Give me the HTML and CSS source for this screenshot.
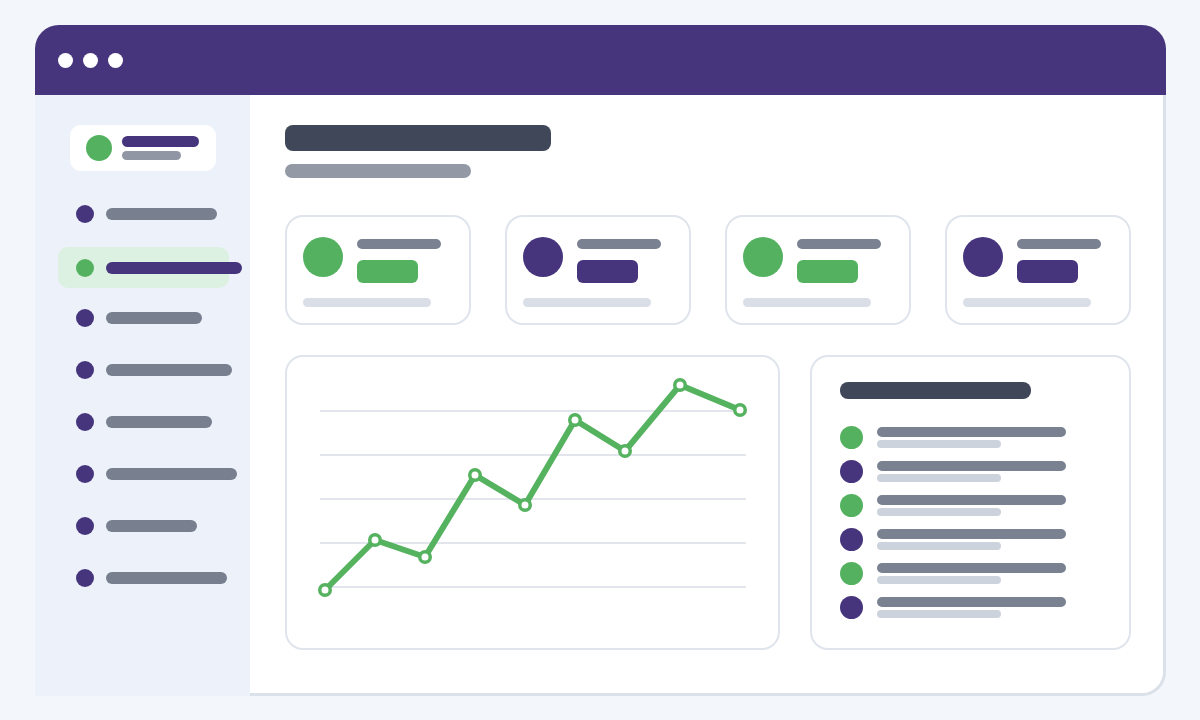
FILE: index.html
```html
<!DOCTYPE html>
<html lang="en">
<head>
<meta charset="utf-8">
<title>Dashboard</title>
<link rel="stylesheet" href="styles.css">
</head>
<body>
<div class="window">
  <div class="titlebar">
    <span class="tdot"></span><span class="tdot"></span><span class="tdot"></span>
  </div>
  <div class="body">
    <aside class="sidebar">
      <div class="brand">
        <span class="brand-dot"></span>
        <div class="brand-lines">
          <span class="brand-l1"></span>
          <span class="brand-l2"></span>
        </div>
      </div>
      <nav class="nav">
        <div class="nav-item"><span class="nav-dot"></span><span class="nav-bar w111"></span></div>
        <div class="nav-item active"><span class="nav-dot"></span><span class="nav-bar w136"></span></div>
        <div class="nav-item"><span class="nav-dot"></span><span class="nav-bar w96"></span></div>
        <div class="nav-item"><span class="nav-dot"></span><span class="nav-bar w126"></span></div>
        <div class="nav-item"><span class="nav-dot"></span><span class="nav-bar w106"></span></div>
        <div class="nav-item"><span class="nav-dot"></span><span class="nav-bar w131"></span></div>
        <div class="nav-item"><span class="nav-dot"></span><span class="nav-bar w91"></span></div>
        <div class="nav-item"><span class="nav-dot"></span><span class="nav-bar w121"></span></div>
      </nav>
    </aside>
    <main class="main">
      <div class="page-title"></div>
      <div class="page-sub"></div>
      <div class="stats">
        <div class="stat">
          <div class="stat-top">
            <span class="stat-icon green"></span>
            <div class="stat-lines"><span class="stat-label"></span><span class="stat-pill green"></span></div>
          </div>
          <span class="stat-foot"></span>
        </div>
        <div class="stat">
          <div class="stat-top">
            <span class="stat-icon purple"></span>
            <div class="stat-lines"><span class="stat-label"></span><span class="stat-pill purple"></span></div>
          </div>
          <span class="stat-foot"></span>
        </div>
        <div class="stat">
          <div class="stat-top">
            <span class="stat-icon green"></span>
            <div class="stat-lines"><span class="stat-label"></span><span class="stat-pill green"></span></div>
          </div>
          <span class="stat-foot"></span>
        </div>
        <div class="stat">
          <div class="stat-top">
            <span class="stat-icon purple"></span>
            <div class="stat-lines"><span class="stat-label"></span><span class="stat-pill purple"></span></div>
          </div>
          <span class="stat-foot"></span>
        </div>
      </div>
      <div class="lower">
        <div class="chart-card">
          <svg class="chart" width="491" height="291" viewBox="0 0 491 291">
            <g stroke="#e2e5ec" stroke-width="2">
              <line x1="33" y1="54" x2="459" y2="54"/>
              <line x1="33" y1="98" x2="459" y2="98"/>
              <line x1="33" y1="142" x2="459" y2="142"/>
              <line x1="33" y1="186" x2="459" y2="186"/>
              <line x1="33" y1="230" x2="459" y2="230"/>
            </g>
            <polyline fill="none" stroke="#55b25f" stroke-width="6" stroke-linejoin="round" stroke-linecap="round"
              points="38,233 88,183 138,200 188,118 238,148 288,63 338,94 393,28 453,53"/>
            <g fill="#ffffff" stroke="#55b25f" stroke-width="3.5">
              <circle cx="38" cy="233" r="5.25"/>
              <circle cx="88" cy="183" r="5.25"/>
              <circle cx="138" cy="200" r="5.25"/>
              <circle cx="188" cy="118" r="5.25"/>
              <circle cx="238" cy="148" r="5.25"/>
              <circle cx="288" cy="63" r="5.25"/>
              <circle cx="338" cy="94" r="5.25"/>
              <circle cx="393" cy="28" r="5.25"/>
              <circle cx="453" cy="53" r="5.25"/>
            </g>
          </svg>
        </div>
        <div class="list-card">
          <div class="list-title"></div>
          <div class="list">
            <div class="row"><span class="row-dot green"></span><div class="row-lines"><span class="row-l1"></span><span class="row-l2"></span></div></div>
            <div class="row"><span class="row-dot purple"></span><div class="row-lines"><span class="row-l1"></span><span class="row-l2"></span></div></div>
            <div class="row"><span class="row-dot green"></span><div class="row-lines"><span class="row-l1"></span><span class="row-l2"></span></div></div>
            <div class="row"><span class="row-dot purple"></span><div class="row-lines"><span class="row-l1"></span><span class="row-l2"></span></div></div>
            <div class="row"><span class="row-dot green"></span><div class="row-lines"><span class="row-l1"></span><span class="row-l2"></span></div></div>
            <div class="row"><span class="row-dot purple"></span><div class="row-lines"><span class="row-l1"></span><span class="row-l2"></span></div></div>
          </div>
        </div>
      </div>
    </main>
  </div>
</div>
</body>
</html>
```

FILE: styles.css
```css
* { box-sizing: border-box; }
html, body { margin: 0; padding: 0; }
body {
  background: #f3f6fb;
  font-family: "Liberation Sans", Arial, sans-serif;
  width: 1200px;
  height: 720px;
  overflow: hidden;
}
.window {
  margin: 25px 0 0 35px;
  width: 1131px;
  height: 671px;
  border-radius: 24px 24px 24px 0;
  overflow: hidden;
  background: #dbe1e9;
  display: flex;
  flex-direction: column;
}
.titlebar {
  height: 70px;
  background: #46357c;
  display: flex;
  align-items: center;
  gap: 10px;
  padding-left: 23px;
  flex: none;
}
.tdot {
  width: 15px;
  height: 15px;
  border-radius: 50%;
  background: #ffffff;
}
.body {
  display: flex;
  flex: 1;
  align-items: flex-start;
}
.sidebar {
  width: 215px;
  height: 601px;
  background: #edf1f9;
  padding-top: 30px;
  flex: none;
}
.brand {
  margin-left: 35px;
  width: 146px;
  height: 46px;
  background: #ffffff;
  border-radius: 11px;
  display: flex;
  align-items: center;
  padding-left: 16px;
  gap: 10px;
}
.brand-dot {
  width: 26px;
  height: 26px;
  border-radius: 50%;
  background: #54b160;
}
.brand-lines {
  display: flex;
  flex-direction: column;
  gap: 4px;
}
.brand-l1 {
  width: 77px;
  height: 11px;
  border-radius: 6px;
  background: #46357c;
}
.brand-l2 {
  width: 59px;
  height: 9px;
  border-radius: 5px;
  background: #9096a3;
}
.nav {
  margin: 23px 0 0 23px;
  display: flex;
  flex-direction: column;
  gap: 12px;
}
.nav-item {
  width: 171px;
  height: 40px;
  display: flex;
  align-items: center;
  padding-left: 18px;
  gap: 12px;
  border-radius: 10px;
}
.nav-item.active {
  background: #dcf1e1;
  height: 41px;
  margin-top: 1px;
  margin-bottom: -2px;
}
.nav-dot {
  width: 18px;
  height: 18px;
  border-radius: 50%;
  background: #46357c;
  flex: none;
}
.nav-item.active .nav-dot { background: #54b160; }
.nav-bar {
  height: 12px;
  border-radius: 6px;
  background: #787f8f;
  flex: none;
}
.nav-item.active .nav-bar { background: #46357c; }
.w111 { width: 111px; }
.w136 { width: 136px; }
.w96 { width: 96px; }
.w126 { width: 126px; }
.w106 { width: 106px; }
.w131 { width: 131px; }
.w91 { width: 91px; }
.w121 { width: 121px; }

.main {
  width: 913px;
  height: 598px;
  background: #ffffff;
  border-bottom-right-radius: 21px;
  padding: 30px 0 0 35px;
}
.page-title {
  width: 266px;
  height: 26px;
  border-radius: 8px;
  background: #3f4759;
}
.page-sub {
  margin-top: 13px;
  width: 186px;
  height: 14px;
  border-radius: 7px;
  background: #939aa6;
}
.stats {
  margin-top: 37px;
  display: flex;
  gap: 34px;
}
.stat {
  width: 186px;
  height: 110px;
  border: 2px solid #e0e4ec;
  border-radius: 18px;
  padding: 20px 0 0 16px;
  display: flex;
  flex-direction: column;
}
.stat-top {
  display: flex;
  gap: 14px;
  align-items: flex-start;
}
.stat-icon {
  width: 40px;
  height: 40px;
  border-radius: 50%;
}
.green { background: #54b160; }
.purple { background: #46357c; }
.stat-lines {
  margin-top: 2px;
  display: flex;
  flex-direction: column;
  gap: 11px;
}
.stat-label {
  width: 84px;
  height: 10px;
  border-radius: 5px;
  background: #7a8191;
}
.stat-pill {
  width: 61px;
  height: 23px;
  border-radius: 6px;
}
.stat-foot {
  margin-top: 15px;
  width: 128px;
  height: 9px;
  border-radius: 5px;
  background: #dadee7;
}
.lower {
  margin-top: 30px;
  display: flex;
  gap: 30px;
}
.chart-card {
  width: 495px;
  height: 295px;
  border: 2px solid #e0e4ec;
  border-radius: 18px;
}
.chart { display: block; }
.list-card {
  width: 321px;
  height: 295px;
  border: 2px solid #e0e4ec;
  border-radius: 18px;
  padding: 25px 0 0 28px;
}
.list-title {
  width: 191px;
  height: 17px;
  border-radius: 8px;
  background: #3f4759;
}
.list {
  margin-top: 27px;
  display: flex;
  flex-direction: column;
  gap: 12px;
}
.row {
  display: flex;
  align-items: center;
  gap: 14px;
  height: 22px;
}
.row-dot {
  width: 23px;
  height: 23px;
  border-radius: 50%;
  flex: none;
}
.row-lines {
  display: flex;
  flex-direction: column;
  gap: 3px;
}
.row-l1 {
  width: 189px;
  height: 10px;
  border-radius: 5px;
  background: #7a8191;
}
.row-l2 {
  width: 124px;
  height: 8px;
  border-radius: 4px;
  background: #cdd3dd;
}
```
